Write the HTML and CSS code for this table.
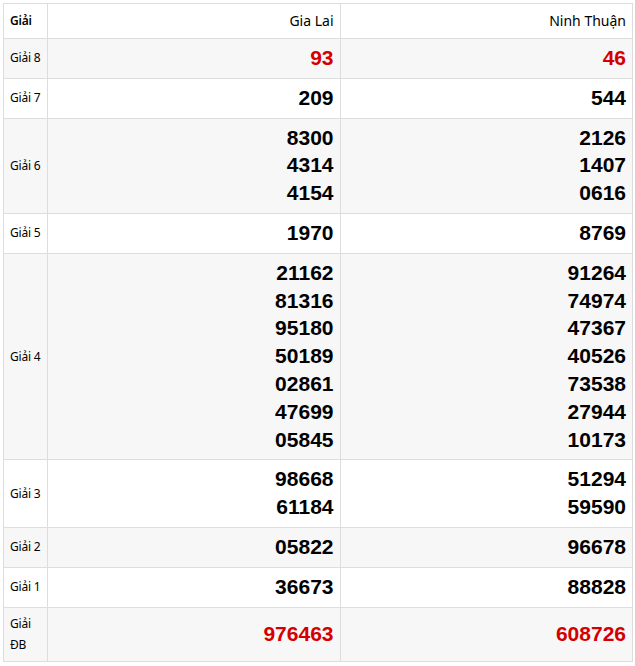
FILE: index.html
```html
<!DOCTYPE html>
<html lang="vi">
<head>
<meta charset="utf-8">
<title>Kết quả xổ số</title>
<link rel="stylesheet" href="styles.css">
</head>
<body>
<table class="kq">
  <colgroup>
    <col class="c-label">
    <col class="c-prov">
    <col class="c-prov">
  </colgroup>
  <thead>
    <tr class="head">
      <th class="label">Giải</th>
      <th class="prov">Gia Lai</th>
      <th class="prov">Ninh Thuận</th>
    </tr>
  </thead>
  <tbody>
    <tr class="alt">
      <td class="label">Giải 8</td>
      <td class="num red">93</td>
      <td class="num red">46</td>
    </tr>
    <tr>
      <td class="label">Giải 7</td>
      <td class="num">209</td>
      <td class="num">544</td>
    </tr>
    <tr class="alt">
      <td class="label">Giải 6</td>
      <td class="num"><div>8300</div><div>4314</div><div>4154</div></td>
      <td class="num"><div>2126</div><div>1407</div><div>0616</div></td>
    </tr>
    <tr>
      <td class="label">Giải 5</td>
      <td class="num">1970</td>
      <td class="num">8769</td>
    </tr>
    <tr class="alt">
      <td class="label">Giải 4</td>
      <td class="num"><div>21162</div><div>81316</div><div>95180</div><div>50189</div><div>02861</div><div>47699</div><div>05845</div></td>
      <td class="num"><div>91264</div><div>74974</div><div>47367</div><div>40526</div><div>73538</div><div>27944</div><div>10173</div></td>
    </tr>
    <tr>
      <td class="label">Giải 3</td>
      <td class="num"><div>98668</div><div>61184</div></td>
      <td class="num"><div>51294</div><div>59590</div></td>
    </tr>
    <tr class="alt">
      <td class="label">Giải 2</td>
      <td class="num">05822</td>
      <td class="num">96678</td>
    </tr>
    <tr>
      <td class="label">Giải 1</td>
      <td class="num">36673</td>
      <td class="num">88828</td>
    </tr>
    <tr class="alt">
      <td class="label">Giải<br>ĐB</td>
      <td class="num red">976463</td>
      <td class="num red">608726</td>
    </tr>
  </tbody>
</table>
</body>
</html>
```

FILE: styles.css
```css
html, body {
  margin: 0;
  padding: 0;
  background: #fff;
}

body {
  padding: 3px;
  font-family: "Noto Sans", "Open Sans", Arial, sans-serif;
  color: #000;
}

.kq {
  width: 630px;
  border-collapse: collapse;
  table-layout: fixed;
}

.c-label {
  width: 44px;
}

.kq th,
.kq td {
  border: 1px solid #dddddd;
  padding: 5px 6px 6px;
  vertical-align: middle;
}

.kq tr.alt td {
  background: #f7f7f7;
}

.head th {
  height: 23px;
  font-size: 14px;
  font-weight: normal;
  text-align: right;
  color: #000;
}

.head th.label {
  text-align: left;
  font-size: 12px;
  font-weight: 600;
}

.label {
  font-size: 12px;
  line-height: 21px;
  text-align: left;
  color: #000;
  white-space: nowrap;
  letter-spacing: -0.2px;
  padding-left: 6px;
  padding-right: 2px;
}

.num {
  font-family: "Liberation Sans", Arial, sans-serif;
  font-weight: bold;
  font-size: 21px;
  line-height: 27.8px;
  text-align: right;
  color: #000;
}

.num.red {
  color: #d40000;
}
```
